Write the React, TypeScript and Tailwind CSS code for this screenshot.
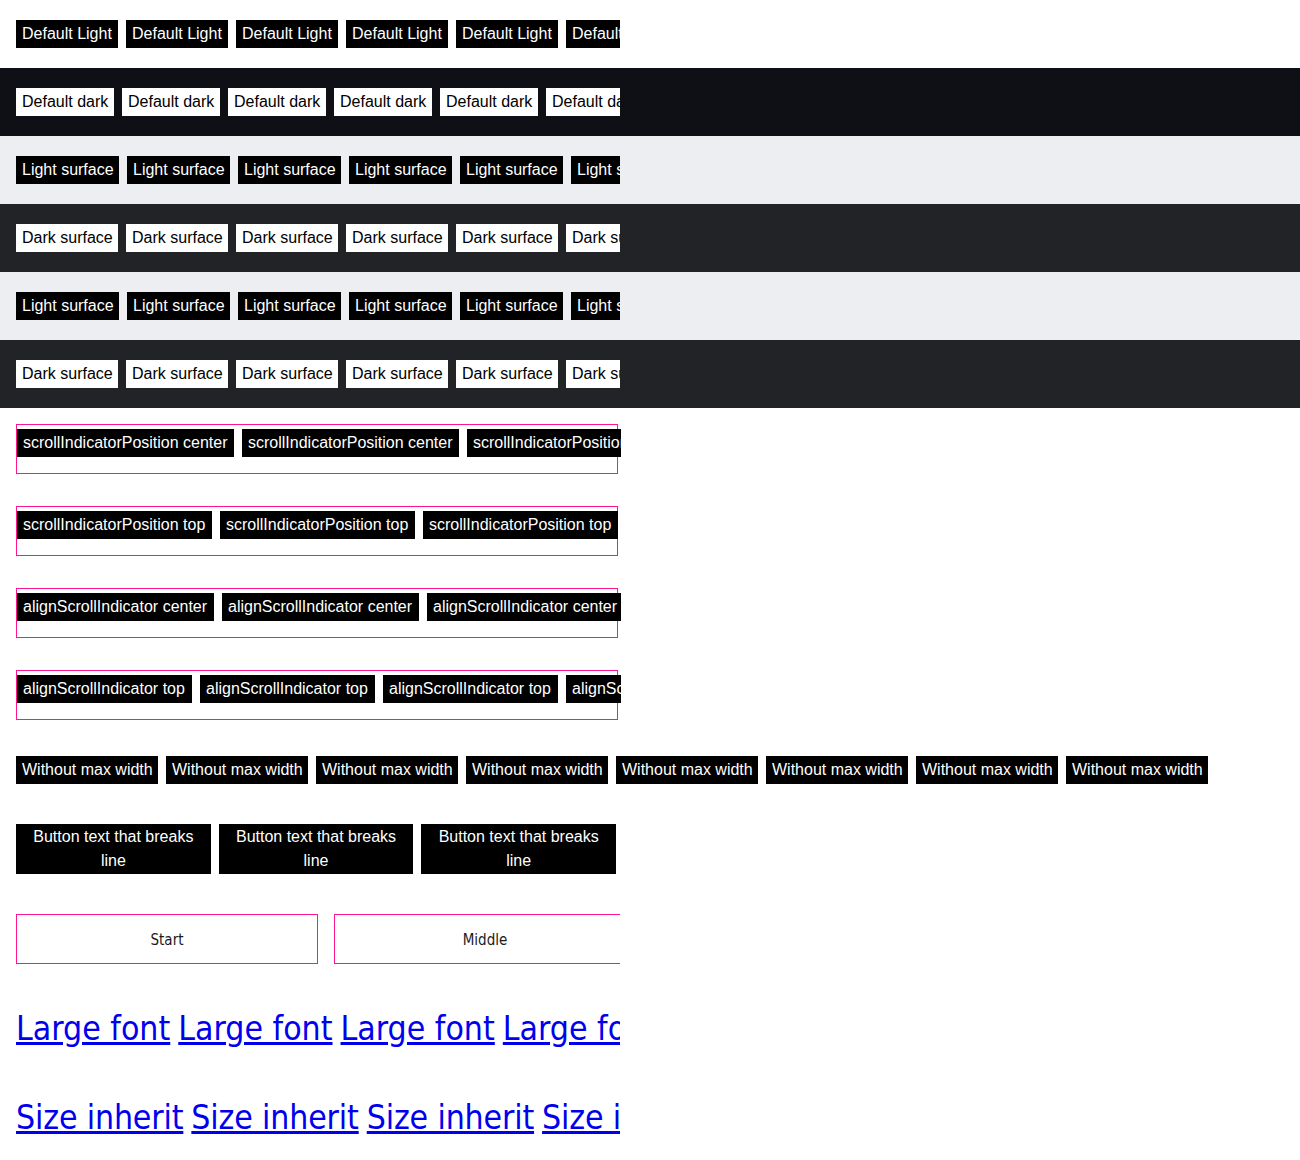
import type { ReactNode } from "react";

const sans = "font-['Liberation_Sans',Arial,sans-serif]";
const narrow = "font-['DejaVu_Sans_Condensed','DejaVu_Sans',sans-serif]";

type Tone = "dark" | "light";

// widths snap to whole pixels like the reference does
const chipWidth: Record<string, string> = {
  "Default Light": "w-[102px]",
  "Default dark": "w-[98px]",
  "Light surface": "w-[103px]",
  "Dark surface": "w-[102px]",
  "Without max width": "w-[142px]",
  "scrollIndicatorPosition center": "w-[217px]",
  "scrollIndicatorPosition top": "w-[195px]",
  "alignScrollIndicator center": "w-[197px]",
  "alignScrollIndicator top": "w-[175px]",
};

function Chip({ label, tone }: { label: string; tone: Tone }) {
  const colors = tone === "dark" ? "bg-black text-white" : "bg-white text-black";
  return (
    <span
      className={`h-[28px] shrink-0 overflow-hidden whitespace-nowrap px-[6px] text-[16px] leading-[28px] ${colors} ${chipWidth[label]}`}
    >
      {label}
    </span>
  );
}

function Strip({ children }: { children: ReactNode }) {
  return <div className="flex w-[604px] gap-2 overflow-hidden">{children}</div>;
}

function SurfaceRow({ bg, label, tone }: { bg: string; label: string; tone: Tone }) {
  return (
    <div className={`h-[68px] px-4 py-5 ${bg}`}>
      <Strip>
        {Array.from({ length: 8 }).map((_, i) => (
          <Chip key={i} label={label} tone={tone} />
        ))}
      </Strip>
    </div>
  );
}

function IndicatorBox({ label }: { label: string }) {
  return (
    <div className="h-[50px] w-[602px] border border-[#ff1493] pt-1">
      <div className="flex w-[604px] gap-2 overflow-hidden">
        {Array.from({ length: 6 }).map((_, i) => (
          <Chip key={i} label={label} tone="dark" />
        ))}
      </div>
    </div>
  );
}

export default function App() {
  return (
    <div className={`min-h-[1160px] bg-white ${sans}`}>
      <SurfaceRow bg="bg-white" label="Default Light" tone="dark" />
      <SurfaceRow bg="bg-[#0f1016]" label="Default dark" tone="light" />
      <SurfaceRow bg="bg-[#edeef2]" label="Light surface" tone="dark" />
      <SurfaceRow bg="bg-[#222327]" label="Dark surface" tone="light" />
      <SurfaceRow bg="bg-[#edeef2]" label="Light surface" tone="dark" />
      <SurfaceRow bg="bg-[#222327]" label="Dark surface" tone="light" />

      <div className="flex flex-col gap-8 px-4 pt-4">
        <IndicatorBox label="scrollIndicatorPosition center" />
        <IndicatorBox label="scrollIndicatorPosition top" />
        <IndicatorBox label="alignScrollIndicator center" />
        <IndicatorBox label="alignScrollIndicator top" />
      </div>

      <div className="mt-9 flex gap-2 px-4">
        {Array.from({ length: 8 }).map((_, i) => (
          <Chip key={i} label="Without max width" tone="dark" />
        ))}
      </div>

      <div className="mt-10 px-4">
        <div className="flex w-[600px] gap-2">
          {Array.from({ length: 3 }).map((_, i) => (
            <span
              key={i}
              className="flex h-[50px] flex-1 items-center justify-center bg-black px-3 text-center text-[16px] leading-[24px] text-white"
            >
              Button text that breaks line
            </span>
          ))}
        </div>
      </div>

      <div className="mt-10 px-4">
        <div className="flex w-[604px] gap-4 overflow-hidden">
          {["Start", "Middle", "End"].map((t) => (
            <div
              key={t}
              className={`flex h-[50px] w-[302px] shrink-0 items-center justify-center border border-[#ff1493] pt-[2px] text-[15px] text-[#1a1a1a] ${narrow}`}
            >
              {t}
            </div>
          ))}
        </div>
      </div>

      <div className="mt-10 px-4">
        <div className={`flex w-[604px] gap-2 overflow-hidden text-[33.5px] leading-[50px] ${narrow}`}>
          {Array.from({ length: 5 }).map((_, i) => (
            <a key={i} href="#" className="shrink-0 whitespace-nowrap text-[#0000ee] underline">
              Large font
            </a>
          ))}
        </div>
      </div>

      <div className="mt-[39px] px-4">
        <div className={`flex w-[604px] gap-2 overflow-hidden text-[33.5px] leading-[50px] tracking-[-0.15px] ${narrow}`}>
          {Array.from({ length: 5 }).map((_, i) => (
            <a key={i} href="#" className="shrink-0 whitespace-nowrap text-[#0000ee] underline">
              Size inherit
            </a>
          ))}
        </div>
      </div>
    </div>
  );
}
